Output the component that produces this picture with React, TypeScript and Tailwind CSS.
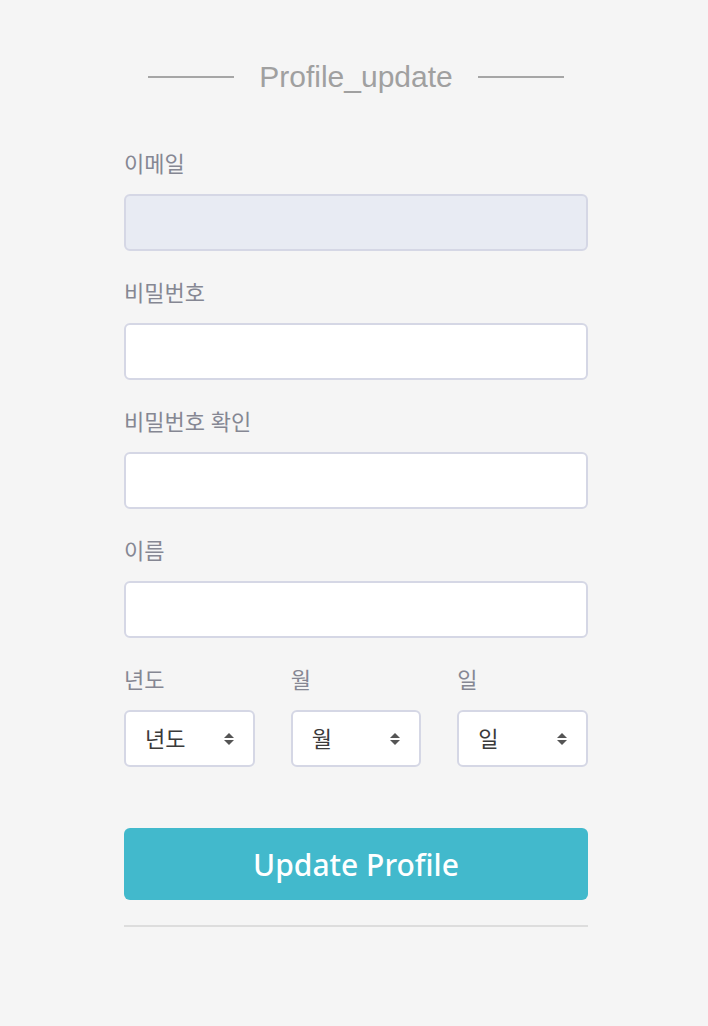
import React from 'react';

const labelCls =
  "block text-[22px] leading-[28px] text-[#858793] mb-[17px]";
const inputCls =
  "w-full h-[57px] rounded-[6px] border-2 border-[#d5d7e5] px-4 text-[20px] outline-none";

const Field = ({ label, disabled }: { label: string; disabled?: boolean }) => (
  <div className="mb-[27px]">
    <label className={labelCls}>{label}</label>
    <input
      className={inputCls + (disabled ? " bg-[#e8ebf3]" : " bg-white")}
      disabled={disabled}
    />
  </div>
);

const SortArrows = () => (
  <svg width="12" height="14" viewBox="0 0 12 14" className="text-[#555]">
    <path d="M6 1 L11 6 H1 Z" fill="currentColor" />
    <path d="M6 13 L11 8 H1 Z" fill="currentColor" />
  </svg>
);

const Select = ({ label }: { label: string }) => (
  <div className="flex flex-col">
    <label className={labelCls}>{label}</label>
    <div className="h-[57px] rounded-[6px] border-2 border-[#d5d7e5] bg-white flex items-center justify-between pl-[19px] pr-[18px]">
      <span className="text-[22px] text-[#3a3a3a]">{label}</span>
      <SortArrows />
    </div>
  </div>
);

export default function App() {
  return (
    <div
      className="min-h-[1026px] bg-[#f5f5f5] flex justify-center pl-1"
      style={{ fontFamily: '"Noto Sans", "Noto Sans CJK KR", sans-serif' }}
    >
      <div className="w-[464px] pt-[58px]">
        <div className="flex items-center justify-center gap-[25px] mb-[53px]">
          <div className="w-[86px] h-[2px] bg-[#a6a6a6]" />
          <h1
            className="text-[30px] leading-[38px] text-[#a0a0a0]"
            style={{ fontFamily: '"Liberation Sans", Arial, sans-serif' }}
          >
            Profile_update
          </h1>
          <div className="w-[86px] h-[2px] bg-[#a6a6a6]" />
        </div>

        <Field label="이메일" disabled />
        <Field label="비밀번호" />
        <Field label="비밀번호 확인" />
        <Field label="이름" />

        <div className="grid grid-cols-3 gap-[36px]">
          <Select label="년도" />
          <Select label="월" />
          <Select label="일" />
        </div>

        <button className="mt-[61px] w-full h-[72px] rounded-[6px] bg-[#42b9cc] text-white text-[30px] font-medium">
          Update Profile
        </button>

        <div className="mt-[25px] h-[2px] bg-[#dddddd]" />
      </div>
    </div>
  );
}
